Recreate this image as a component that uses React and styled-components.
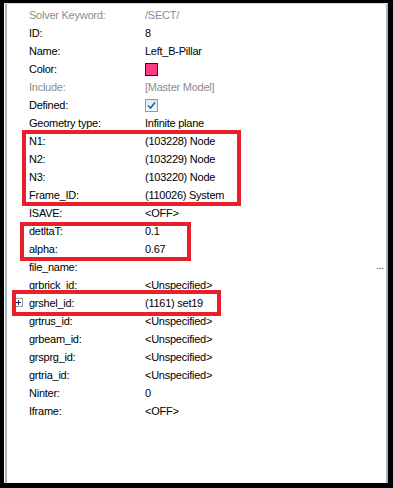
import React from "react";
import styled, { createGlobalStyle } from "styled-components";

const Global = createGlobalStyle`
  html, body { margin: 0; padding: 0; background: #000; }
  #root { width: 393px; height: 488px; }
`;

const Frame = styled.div`
  position: relative;
  width: 393px;
  height: 488px;
  background: #000;
  padding: 3px 5px 5px 4px;
  box-sizing: border-box;
  display: flex;
`;

const Panel = styled.div`
  flex: 1;
  background: #fff;
  border-top: 1px solid #d4d8dc;
  padding-left: 1px;
  display: flex;
`;

const Sheet = styled.div`
  flex: 1;
  border-left: 2px solid #aab4be;
  border-right: 2px solid #aab4be;
  padding-top: 2px;
  display: flex;
  flex-direction: column;
  font-family: "Liberation Sans", Arial, sans-serif;
  font-size: 11px;
  letter-spacing: -0.25px;
`;

const Row = styled.div`
  position: relative;
  display: grid;
  grid-template-columns: 116px 1fr;
  height: 18px;
  align-items: center;
  padding-left: 22px;
  color: ${(p) => (p.$muted ? "#8c8c8c" : "#000")};
  white-space: nowrap;
`;

const Label = styled.span``;

const Value = styled.span`
  display: flex;
  align-items: center;
  justify-content: space-between;
  padding-right: 2px;
`;

const Swatch = styled.span`
  width: 11px;
  height: 11px;
  border: 1px solid #1a1a1a;
  background: #ff3a86;
`;

const Check = styled.span`
  width: 11px;
  height: 11px;
  border: 1px solid #8e9aa6;
  background: linear-gradient(#e4e8ec, #f6f7f8);
  display: flex;
  align-items: center;
  justify-content: center;
`;

const Dots = styled.span`
  font-size: 9px;
  letter-spacing: 0;
  line-height: 1;
  margin-top: -2px;
`;

const Expander = styled.span`
  position: absolute;
  left: 7px;
  top: 4px;
  width: 7px;
  height: 7px;
  border: 1px solid #9a9a9a;
  background: #fff;
  display: flex;
  align-items: center;
  justify-content: center;
`;

const Annot = styled.div`
  position: absolute;
  left: ${(p) => p.$x}px;
  top: ${(p) => p.$y}px;
  width: ${(p) => p.$w}px;
  height: ${(p) => p.$h}px;
  border: 4px solid #e8202b;
  box-sizing: border-box;
  pointer-events: none;
`;

const rows = [
  { l: "Solver Keyword:", v: "/SECT/", muted: true },
  { l: "ID:", v: "8" },
  { l: "Name:", v: "Left_B-Pillar" },
  { l: "Color:", kind: "swatch" },
  { l: "Include:", v: "[Master Model]", muted: true },
  { l: "Defined:", kind: "check" },
  { l: "Geometry type:", v: "Infinite plane" },
  { l: "N1:", v: "(103228) Node" },
  { l: "N2:", v: "(103229) Node" },
  { l: "N3:", v: "(103220) Node" },
  { l: "Frame_ID:", v: "(110026) System" },
  { l: "ISAVE:", v: "<OFF>" },
  { l: "detltaT:", v: "0.1" },
  { l: "alpha:", v: "0.67" },
  { l: "file_name:", kind: "dots" },
  { l: "grbrick_id:", v: "<Unspecified>" },
  { l: "grshel_id:", v: "(1161) set19", expand: true },
  { l: "grtrus_id:", v: "<Unspecified>" },
  { l: "grbeam_id:", v: "<Unspecified>" },
  { l: "grsprg_id:", v: "<Unspecified>" },
  { l: "grtria_id:", v: "<Unspecified>" },
  { l: "Ninter:", v: "0" },
  { l: "Iframe:", v: "<OFF>" },
];

function renderValue(r) {
  if (r.kind === "swatch") return <Swatch />;
  if (r.kind === "check")
    return (
      <Check>
        <svg width="9" height="9" viewBox="0 0 9 9">
          <path d="M1 4.5 L3.5 7 L8 1.5" fill="none" stroke="#1d63b0" strokeWidth="1.6" />
        </svg>
      </Check>
    );
  if (r.kind === "dots")
    return (
      <>
        <span />
        <Dots>...</Dots>
      </>
    );
  return r.v;
}

export default function App() {
  return (
    <>
      <Global />
      <Frame>
        <Panel>
          <Sheet>
            {rows.map((r) => (
              <Row key={r.l} $muted={r.muted}>
                {r.expand && (
                  <Expander>
                    <svg width="5" height="5" viewBox="0 0 5 5">
                      <path d="M0 2.5 H5 M2.5 0 V5" stroke="#1a2a5a" strokeWidth="1" />
                    </svg>
                  </Expander>
                )}
                <Label>{r.l}</Label>
                <Value>{renderValue(r)}</Value>
              </Row>
            ))}
          </Sheet>
        </Panel>
        <Annot $x={22} $y={130} $w={219} $h={76} />
        <Annot $x={20} $y={222} $w={171} $h={39} />
        <Annot $x={12} $y={290} $w={209} $h={26} />
      </Frame>
    </>
  );
}
